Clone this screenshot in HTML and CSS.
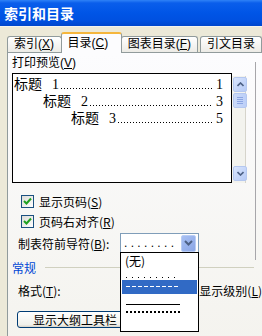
FILE: index.html
```html
<!DOCTYPE html>
<html lang="zh-CN">
<head>
  <meta charset="UTF-8">
  <title>索引和目录</title>
  <link rel="stylesheet" href="styles.css">
</head>
<body>

<div class="titlebar">索引和目录</div>

<div class="tabs">
  <div class="tab">索引(<u>X</u>)</div>
  <div class="tab active">目录(<u>C</u>)</div>
  <div class="tab">图表目录(<u>F</u>)</div>
  <div class="tab">引文目录</div>
</div>

<div class="panel">
  <div class="top">
    <div class="left">
      <div class="label">打印预览(<u>V</u>)</div>
      <div class="preview-row">
        <div class="preview">
          <div class="toc lv1"><span>标题</span><span class="num">1</span><span class="leader"></span><span>1</span></div>
          <div class="toc lv2"><span>标题</span><span class="num">2</span><span class="leader"></span><span>3</span></div>
          <div class="toc lv3"><span>标题</span><span class="num">3</span><span class="leader"></span><span>5</span></div>
        </div>
        <div class="scrollbar">
          <div class="sbtn">
            <svg width="7" height="5" viewBox="0 0 7 5"><path d="M0.5 4 L3.5 1 L6.5 4" fill="none" stroke="#4d6185" stroke-width="1.6"/></svg>
          </div>
          <div class="thumb"><i></i><i></i><i></i><i></i></div>
          <div class="track"></div>
          <div class="sbtn">
            <svg width="7" height="5" viewBox="0 0 7 5"><path d="M0.5 1 L3.5 4 L6.5 1" fill="none" stroke="#4d6185" stroke-width="1.6"/></svg>
          </div>
        </div>
      </div>

      <div class="check">
        <span class="box"><svg width="9" height="9" viewBox="0 0 9 9"><path d="M1 4 L3.5 6.5 L8 1.5" fill="none" stroke="#21a121" stroke-width="2"/></svg></span>
        显示页码(<u>S</u>)
      </div>
      <div class="check">
        <span class="box"><svg width="9" height="9" viewBox="0 0 9 9"><path d="M1 4 L3.5 6.5 L8 1.5" fill="none" stroke="#21a121" stroke-width="2"/></svg></span>
        页码右对齐(<u>R</u>)
      </div>

      <div class="leader-row">
        <span class="leader-label">制表符前导符(<u>B</u>):</span>
        <div class="combo">
          <span class="combo-value">. . . . . . . .</span>
          <span class="combo-btn">
            <svg width="9" height="6" viewBox="0 0 9 6"><path d="M1 1 L4.5 4.5 L8 1" fill="none" stroke="#4d6185" stroke-width="2"/></svg>
          </span>
        </div>
      </div>
    </div>
    <div class="right"></div>
  </div>

  <div class="group">
    <span class="group-title">常规</span>
    <span class="group-line"></span>
  </div>
  <div class="format-row">
    <span class="format-label">格式(<u>T</u>):</span>
    <span class="level-label">显示级别(<u>L</u>)</span>
  </div>
  <div class="button">显示大纲工具栏</div>
</div>

<div class="droplist">
  <div class="item">(无)</div>
  <div class="item"><span class="dots"></span></div>
  <div class="item selected"><span class="dashes"></span></div>
  <div class="item"><span class="solid"></span></div>
  <div class="item"><span class="bold-dots"></span></div>
</div>

</body>
</html>
```

FILE: styles.css
```css
body {
  margin: 0;
  width: 262px;
  height: 336px;
  overflow: hidden;
  background: #ece9d8;
  font-family: "Liberation Sans", "Noto Sans CJK SC", sans-serif;
  font-size: 12px;
  color: #000;
}
u {
  text-decoration: underline;
}
.titlebar {
  height: 26px;
  line-height: 27px;
  padding-left: 4px;
  color: #fff;
  font-family: "Noto Sans CJK SC", sans-serif;
  font-weight: bold;
  font-size: 14px;
  background: linear-gradient(#2f82f7 0, #0a5eeb 3px, #0055e6 50%, #0050e0 80%, #0046cc 100%);
  border-bottom: 1px solid #f4f3ee;
}
.tabs {
  display: flex;
  align-items: flex-end;
  padding: 6px 0 0 7px;
  height: 19px;
  white-space: nowrap;
}
.tab {
  height: 15px;
  line-height: 15px;
  padding: 0 6px;
  border: 1px solid #919b9c;
  border-bottom: none;
  border-radius: 3px 3px 0 0;
  background: linear-gradient(#fff, #ecebe6);
  margin-left: -1px;
}
.tab:nth-child(1) { width: 44px; margin-left: 0; }
.tab:nth-child(3) { width: 67px; }
.tab:nth-child(4) { margin-left: 2px; }
.tab.active {
  height: 19px;
  line-height: 18px;
  width: 51px;
  background: #fcfcfe;
  border-top: 2px solid #f5b63c;
  position: relative;
  z-index: 1;
  margin-bottom: -1px;
}
.panel {
  margin-left: 7px;
  border: 1px solid #919b9c;
  border-right: none;
  background: linear-gradient(#fcfcfe, #f4f3ee);
  height: 290px;
  padding-left: 4px;
}
.top {
  display: flex;
}
.left {
  width: 243px;
}
.right {
  width: 6px;
  margin-top: 9px;
  height: 198px;
  border-left: 1px solid #a7a6aa;
}
.label {
  margin-top: 2px;
  height: 18px;
  line-height: 17px;
}
.preview-row {
  display: flex;
}
.preview {
  width: 220px;
  height: 110px;
  box-sizing: border-box;
  border: 1px solid #000;
  background: #fff;
  padding: 3px 8px 0 1px;
  font-family: "Liberation Serif", "Noto Sans CJK SC", serif;
  font-size: 14px;
}
.toc {
  display: flex;
  align-items: baseline;
  height: 17px;
  line-height: 16px;
}
.toc .num {
  margin-left: 10px;
}
.lv2 { padding-left: 29px; }
.lv3 { padding-left: 57px; }
.leader {
  flex: 1;
  height: 1px;
  margin: 0 3px 0 2px;
  background: linear-gradient(to right, #000 1px, transparent 1px) repeat-x 0 0 / 3px 1px;
}
.scrollbar {
  margin-top: 3px;
  height: 107px;
  width: 14px;
  box-sizing: border-box;
  padding: 1px 1px 1px 1px;
  border-right: 1px solid #d6d4cb;
  background: #f3f3ee;
  display: flex;
  flex-direction: column;
}
.sbtn {
  width: 12px;
  height: 13px;
  border: 1px solid #b5c8f0;
  border-radius: 2px;
  background: linear-gradient(135deg, #d9e5fd, #b6caf6);
  display: flex;
  align-items: center;
  justify-content: center;
  margin-bottom: 1px;
}
.thumb {
  width: 12px;
  height: 13px;
  border: 1px solid #b5c8f0;
  border-radius: 2px;
  background: linear-gradient(to right, #cbdaf9, #bccff8);
  display: flex;
  flex-direction: column;
  align-items: center;
  justify-content: center;
  gap: 1px;
}
.thumb i {
  display: block;
  width: 6px;
  height: 1px;
  background: #8ca6e3;
}
.track {
  flex: 1;
}
.check {
  display: flex;
  align-items: center;
  height: 20px;
  padding-left: 9px;
  font-family: "Noto Sans CJK SC", sans-serif;
}
.check:first-of-type {
  margin-top: 8px;
}
.preview-row + .check {
  margin-top: 8px;
}
.box {
  width: 11px;
  height: 11px;
  border: 1px solid #1c5180;
  background: linear-gradient(135deg, #dcdcd7, #fff);
  display: flex;
  align-items: center;
  justify-content: center;
  margin-right: 5px;
}
.leader-row {
  display: flex;
  align-items: center;
  margin-top: 2px;
  height: 20px;
}
.leader-label {
  padding-left: 6px;
  width: 102px;
  font-family: "Noto Sans CJK SC", sans-serif;
}
.combo {
  width: 79px;
  height: 20px;
  box-sizing: border-box;
  border: 1px solid #7f9db9;
  background: #fff;
  display: flex;
  align-items: center;
  justify-content: space-between;
  padding: 1px 2px 1px 3px;
}
.combo-value {
  letter-spacing: 0;
  line-height: 10px;
}
.combo-btn {
  width: 13px;
  height: 15px;
  border: 1px solid #b9cdf5;
  border-radius: 2px;
  background: linear-gradient(135deg, #a8c0f3, #8aa6e6);
  display: flex;
  align-items: center;
  justify-content: center;
}
.group {
  display: flex;
  align-items: center;
  height: 14px;
  margin-top: 0;
}
.group-title {
  color: #0046d5;
  font-family: "Noto Sans CJK SC", sans-serif;
}
.group-line {
  flex: 1;
  height: 1px;
  margin: 0 8px 0 9px;
  background: #d0d0bf;
}
.format-row {
  display: flex;
  align-items: center;
  height: 20px;
  margin-top: 6px;
  padding-left: 6px;
  font-family: "Noto Sans CJK SC", sans-serif;
  white-space: nowrap;
}
.format-label {
  width: 185px;
}
.button {
  margin: 11px 0 0 5px;
  width: 120px;
  height: 17px;
  line-height: 16px;
  box-sizing: border-box;
  border: 1px solid #003c74;
  border-radius: 3px;
  background: linear-gradient(#fff, #f0f0ea 85%, #d6d0c5);
  padding-left: 15px;
  font-family: "Noto Sans CJK SC", sans-serif;
}
.droplist {
  position: absolute;
  left: 120px;
  top: 252px;
  width: 79px;
  height: 80px;
  box-sizing: border-box;
  border: 1px solid #000;
  background: #fff;
  padding: 1px;
  font-family: "Noto Sans CJK SC", sans-serif;
}
.item {
  height: 13px;
  line-height: 13px;
  padding-left: 3px;
  position: relative;
}
.item.selected {
  background: #316ac5;
  height: 14px;
}
.item span {
  position: absolute;
  left: 4px;
  width: 54px;
}
.dots {
  bottom: 2px;
  height: 1px;
  background: linear-gradient(to right, #000 1px, transparent 1px) repeat-x 0 0 / 6px 1px;
}
.dashes {
  top: 6px;
  height: 1px;
  background: linear-gradient(to right, #fff 4px, transparent 4px) repeat-x 0 0 / 6px 1px;
}
.solid {
  bottom: 2px;
  height: 1px;
  background: #000;
}
.bold-dots {
  top: 4px;
  height: 2px;
  background: linear-gradient(to right, #000 2px, transparent 2px) repeat-x 0 0 / 4px 2px;
}
```
